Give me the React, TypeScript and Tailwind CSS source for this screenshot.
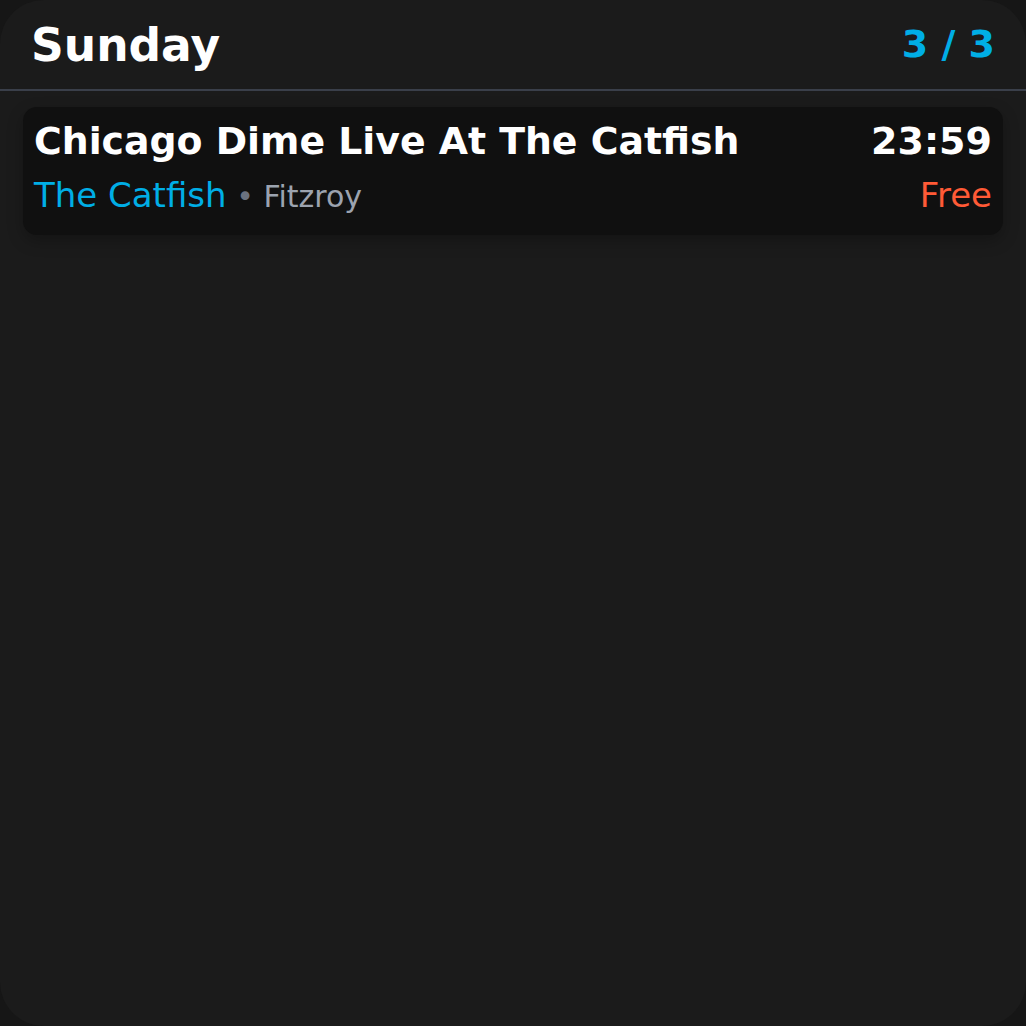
const event = {
  title: 'Chicago Dime Live At The Catfish',
  time: '23:59',
  venue: 'The Catfish',
  suburb: 'Fitzroy',
  price: 'Free',
};

export default function App() {
  return (
    <div
      className="w-[1026px] h-[1026px] bg-[#161616] overflow-hidden"
      style={{ fontFamily: '"DejaVu Sans", sans-serif' }}
    >
      <div className="w-full h-full rounded-[44px] bg-[#1b1b1b] flex flex-col">
        <div className="h-[91px] flex items-start justify-between pl-[31px] pr-[31px] pt-[19px] border-b-2 border-[#3a3f4a]">
          <h1 className="text-[45.5px] font-bold text-white leading-[54px]">Sunday</h1>
          <span className="text-[38px] font-bold text-[#00aee6] leading-[44px] mt-[3px]">3 / 3</span>
        </div>
        <div className="px-[23px] pt-[16px]">
          <div className="rounded-[14px] bg-[#101010] h-[128px] px-[11px] pt-[12px] shadow-[0_6px_16px_rgba(0,0,0,0.25)]">
            <div className="flex justify-between items-baseline">
              <span className="text-[37.8px] font-bold text-white leading-[44px]">{event.title}</span>
              <span className="text-[38px] font-bold text-white leading-[44px]">{event.time}</span>
            </div>
            <div className="flex justify-between items-baseline mt-[12px]">
              <div className="text-[34px] leading-[40px]">
                <span className="text-[#00aee6]">{event.venue}</span>
                <span className="text-[30px]">
                  <span className="text-[#6b7280]"> • </span>
                  <span className="text-[#9ca3af]">{event.suburb}</span>
                </span>
              </div>
              <span className="text-[34px] text-[#ff5a36] leading-[40px]">{event.price}</span>
            </div>
          </div>
        </div>
      </div>
    </div>
  );
}
